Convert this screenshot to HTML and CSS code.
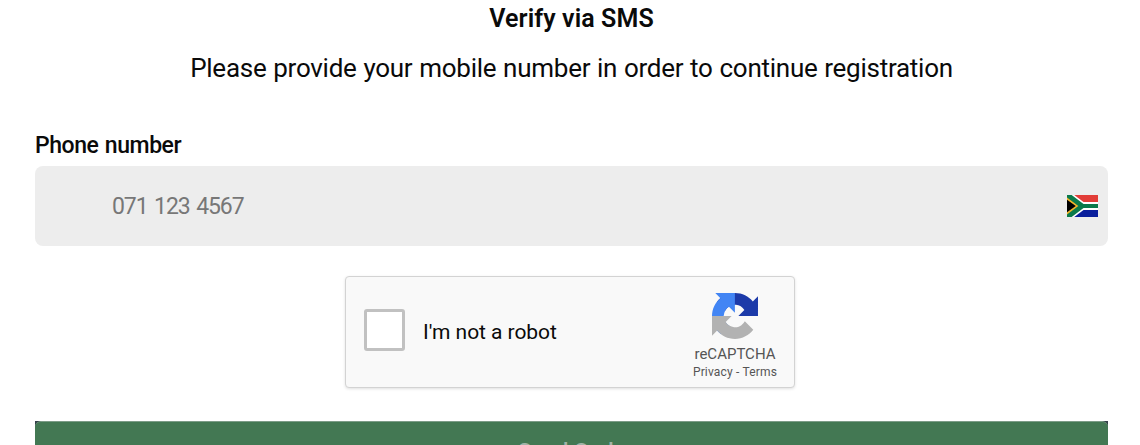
FILE: index.html
```html
<!DOCTYPE html>
<html lang="en">
<head>
  <meta charset="UTF-8" />
  <title>Verify via SMS</title>
  <link rel="stylesheet" href="styles.css">
</head>
<body>
  <form class="verify">
    <h2>Verify via SMS</h2>
    <p class="intro">Please provide your mobile number in order to continue registration</p>

    <label for="phone">Phone number</label>
    <div class="phone-box">
      <input type="tel" id="phone" placeholder="071 123 4567" autocomplete="off" />
      <svg class="flag" viewBox="0 0 30 22" preserveAspectRatio="none">
        <path fill="#fff" d="M0 0h30v22H0z"/>
        <path fill="#e23d38" d="M7 0h23v7H16z"/>
        <path fill="#0a1f9c" d="M7 22h23v-7H16z"/>
        <path fill="#0b7a4b" d="M0 0h4.500l11.500 9H30v4H16L4.500 22H0z"/>
        <path fill="#f2b52c" d="M0 2.500L11 11 0 19.500z"/>
        <path fill="#000" d="M0 4.800L8.500 11 0 17.200z"/>
      </svg>
    </div>

    <div class="captcha">
      <input type="checkbox" id="robot" />
      <label for="robot">I'm not a robot</label>
      <div class="captcha-brand">
        <svg class="captcha-logo" viewBox="0 0 64 64">
          <path fill="#1c3aa9" d="M64 31.955l-.033-1.370V4.687l-7.160 7.160C50.948 4.674 42.033.093 32.050.093c-10.400 0-19.622 4.960-25.458 12.640l11.736 11.860a15.550 15.550 0 0 1 4.754-5.334c2.050-1.600 4.952-2.906 8.968-2.906.485 0 .860.057 1.135.163 4.976.393 9.288 3.140 11.828 7.124l-8.307 8.307L64 31.953"/>
          <path fill="#4285f4" d="M31.862.094l-1.370.033H4.594l7.160 7.160C4.580 13.147 0 22.060 0 32.046c0 10.400 4.960 19.622 12.640 25.458L24.500 45.768a15.550 15.550 0 0 1-5.334-4.754c-1.600-2.050-2.906-4.952-2.906-8.968 0-.485.057-.860.163-1.135.393-4.976 3.140-9.288 7.124-11.828l8.307 8.307L31.860.095"/>
          <path fill="#b2b2b2" d="M.001 32.045l.033 1.370v25.898l7.160-7.160c5.860 7.173 14.774 11.754 24.760 11.754 10.400 0 19.622-4.960 25.458-12.640l-11.736-11.860a15.550 15.550 0 0 1-4.754 5.334c-2.050 1.600-4.952 2.906-8.968 2.906-.485 0-.860-.057-1.135-.163-4.976-.393-9.288-3.140-11.828-7.124l8.307-8.307c-10.522.040-22.400.066-27.295-.005"/>
        </svg>
        <div class="captcha-name">reCAPTCHA</div>
        <div class="captcha-links">Privacy - Terms</div>
      </div>
    </div>

    <div class="submit-wrap">
      <button type="button">Send Code</button>
    </div>
  </form>
</body>
</html>
```
FILE: styles.css
```css
* {
  box-sizing: border-box;
}
body {
  margin: 0;
  height: 445px;
  overflow: hidden;
  background: #fff;
  color: #0a0a0a;
  font-family: Roboto, Arial, sans-serif;
}
.verify {
  width: 1073px;
  margin-left: 35px;
}
h2 {
  margin: 0;
  padding-top: 3px;
  font-size: 25px;
  line-height: 32px;
  font-weight: 600;
  letter-spacing: 0.1px;
  text-align: center;
}
.intro {
  margin: 16px 0 0;
  font-size: 26px;
  line-height: 34px;
  letter-spacing: -0.26px;
  word-spacing: 0.6px;
  text-align: center;
}
.verify > label {
  display: block;
  margin-top: 46px;
  font-size: 23px;
  line-height: 30px;
  font-weight: 500;
  letter-spacing: -0.45px;
  word-spacing: 1.2px;
}
.phone-box {
  display: flex;
  align-items: center;
  height: 80px;
  margin-top: 5px;
  padding: 0 10px 0 77px;
  border-radius: 8px;
  background: #ededed;
}
.phone-box input {
  flex: 1;
  padding: 1px 0 0;
  border: none;
  outline: none;
  background: none;
  font-family: inherit;
  font-size: 23px;
  letter-spacing: -1.1px;
  word-spacing: 2px;
}
.phone-box input::placeholder {
  color: #777;
}
.flag {
  width: 31px;
  height: 22px;
}
.captcha {
  display: flex;
  align-items: center;
  width: 450px;
  height: 112px;
  margin: 30px 0 0 310px;
  padding: 0 16px 0 18px;
  border: 1px solid #d3d3d3;
  border-radius: 4px;
  background: #f9f9f9;
  box-shadow: 0 1px 3px rgba(0,0,0,0.12);
}
.captcha input {
  appearance: none;
  width: 41px;
  height: 42px;
  margin: -4px 18px 0 0;
  border: 3px solid #c1c1c1;
  border-radius: 3px;
  background: #fff;
}
.captcha label {
  flex: 1;
  font-size: 21px;
  letter-spacing: -0.05px;
}
.captcha-brand {
  display: flex;
  flex-direction: column;
  align-items: center;
  width: 86px;
  padding-top: 9px;
  color: #555;
  white-space: nowrap;
}
.captcha-logo {
  width: 46px;
  height: 46px;
}
.captcha-name {
  margin-top: 6px;
  font-size: 15px;
  line-height: 18px;
}
.captcha-links {
  font-size: 12px;
  line-height: 18px;
  letter-spacing: 0.18px;
}
.submit-wrap {
  margin-top: 33px;
  background: #34424a;
}
.submit-wrap button {
  display: block;
  width: 100%;
  height: 62px;
  padding: 0;
  border: none;
  border-top: 1px solid #7c9c87;
  border-radius: 6px;
  background: #437853;
  color: #a0b4a7;
  font-family: inherit;
  font-size: 23px;
  font-weight: 500;
  letter-spacing: -0.4px;
}
```
